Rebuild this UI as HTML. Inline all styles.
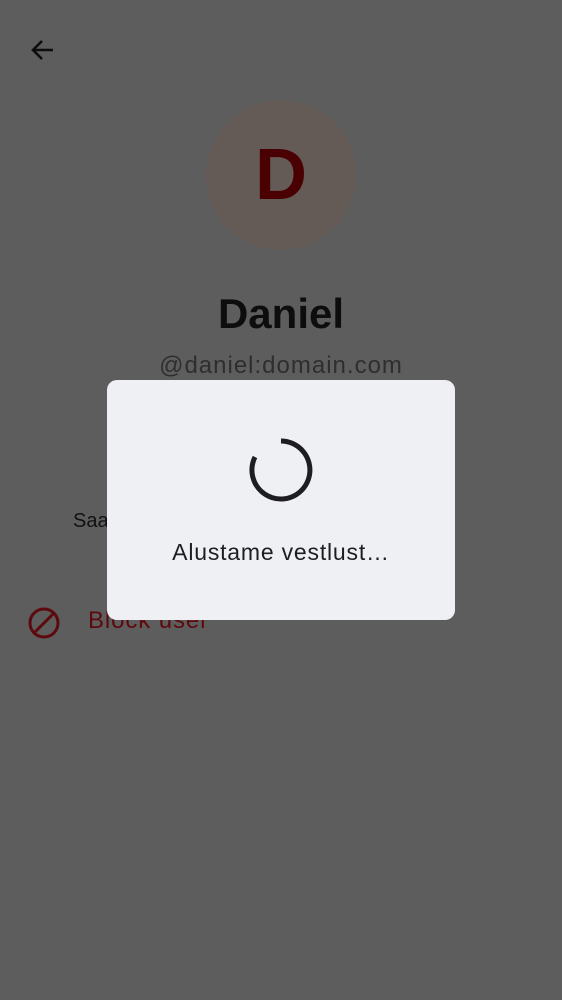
<!DOCTYPE html>
<html><head><style>
html,body{margin:0;padding:0}
body{width:562px;height:1000px;background:#5d5d5d;position:relative;overflow:hidden;font-family:"Liberation Sans",Roboto,sans-serif}
.av{position:absolute;left:206px;top:100px;width:150px;height:150px;border-radius:50%;background:#645a56;color:#4a0002;font-weight:bold;font-size:72px;text-align:center;line-height:150px}
.name{position:absolute;top:290px;width:562px;text-align:center;font-size:42px;font-weight:bold;color:#0d0d0d}
.mx{position:absolute;top:352px;width:562px;text-align:center;font-size:24px;letter-spacing:1px;color:#2e2e2e}
.saa{position:absolute;left:73px;top:510px;font-size:20px;color:#111}
.blk{position:absolute;left:88px;top:607px;font-size:24px;letter-spacing:0.9px;color:#5c0a0e}
.dlg{position:absolute;left:107px;top:380px;width:348px;height:240px;background:#eff0f4;border-radius:10px}
.msg{position:absolute;top:539px;width:562px;text-align:center;font-size:23px;letter-spacing:0.8px;color:#1e1e22;left:0}
</style></head><body>
<svg style="position:absolute;left:28px;top:36px" width="30" height="30" viewBox="0 0 30 30"><path d="M25 14H5M14 5L5 14L14 23" stroke="#0d0d0d" stroke-width="2.6" fill="none"/></svg>
<div class="av">D</div>
<div class="name">Daniel</div>
<div class="mx">@daniel:domain.com</div>
<div class="saa">Saa</div>
<svg style="position:absolute;left:27px;top:606px" width="34" height="34" viewBox="0 0 34 34"><circle cx="17" cy="17" r="14" stroke="#5c0a0e" stroke-width="3" fill="none"/><path d="M7 27L27 7" stroke="#5c0a0e" stroke-width="3"/></svg>
<div class="blk">Block user</div>
<div class="dlg"></div>
<svg style="position:absolute;left:247px;top:436px" width="68" height="68" viewBox="0 0 68 68"><path d="M34 5A29 29 0 1 1 8 21" stroke="#1e1e22" stroke-width="5" fill="none"/></svg>
<div class="msg">Alustame vestlust…</div>
</body></html>
